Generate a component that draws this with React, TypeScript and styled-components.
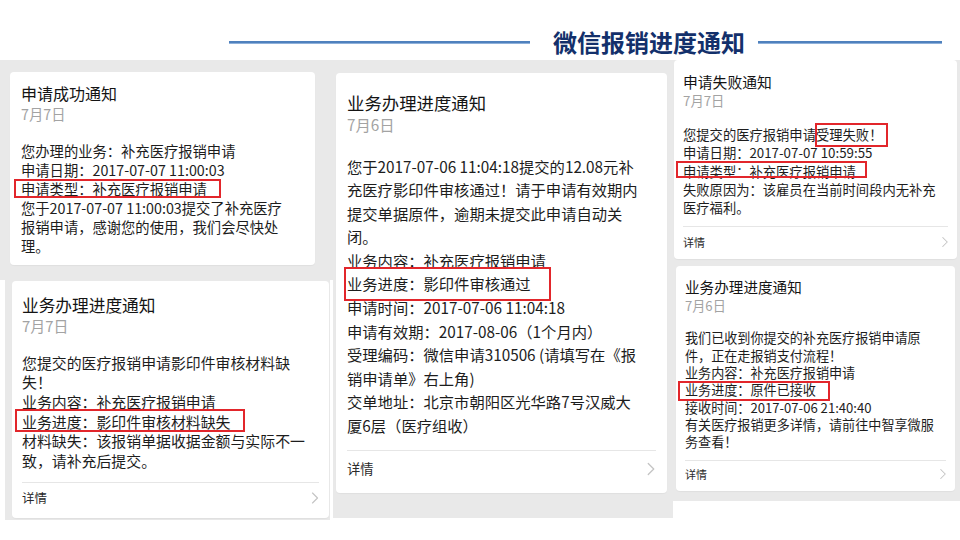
import React from "react";
import styled, { createGlobalStyle } from "styled-components";
import { ChevronRight } from "lucide-react";

const GlobalStyle = createGlobalStyle`
  html, body {
    margin: 0;
    padding: 0;
    background: #ffffff;
  }
  body {
    width: 960px;
    height: 540px;
    overflow: hidden;
    font-family: "Noto Sans CJK SC", "Noto Sans", sans-serif;
  }
  * {
    box-sizing: border-box;
  }
`;

type Spec = {
  pt: number;
  px: number;
  title: number;
  titleLh: number;
  dateLh: number;
  dateMt?: number;
  body: number;
  lh: number;
  gap: number;
  tail: number;
  foot?: { h: number; pt: number; size: number; lh: number };
};

type Line = string | { pre?: string; mark: string; inset: string };

type Notice = {
  title: string;
  date: string;
  spec: Spec;
  lines: Line[];
};

const Page = styled.div`
  width: 960px;
  height: 540px;
  display: flex;
  flex-direction: column;
`;

const Header = styled.header`
  height: 60px;
  padding: 24px 0 0 229px;
  display: flex;
  align-items: center;
`;

const Rule = styled.div<{ $w: number }>`
  width: ${(p) => p.$w}px;
  height: 3px;
  background: #4f81bd;
  border-bottom: 1px solid #8eb0da;
`;

const Heading = styled.h1`
  margin: 0 13px 0 23px;
  font-size: 24px;
  line-height: 30px;
  font-weight: 700;
  color: #13306b;
  letter-spacing: 0;
  white-space: nowrap;
`;

const Stage = styled.main`
  display: flex;
  align-items: flex-start;
`;

const Column = styled.div`
  width: 333px;
  display: flex;
  flex-direction: column;
`;

const Shot = styled.section<{ $w: number; $h: number; $pad: string; $ml?: number }>`
  width: ${(p) => p.$w}px;
  height: ${(p) => p.$h}px;
  margin-left: ${(p) => p.$ml ?? 0}px;
  padding: ${(p) => p.$pad};
  background: #e9e9e9;
  display: flex;
  flex-direction: column;
  gap: 7px;
`;

const Card = styled.article<{ $s: Spec; $mx?: number }>`
  margin: 0 ${(p) => p.$mx ?? 0}px;
  background: #ffffff;
  border-radius: 4px;
  box-shadow: 0 1px 1px rgba(0, 0, 0, 0.04);
  padding-top: ${(p) => p.$s.pt}px;
  padding-bottom: ${(p) => (p.$s.foot ? 0 : p.$s.tail)}px;
  --px: ${(p) => p.$s.px}px;
  --title: ${(p) => p.$s.title}px;
  --tlh: ${(p) => p.$s.titleLh}px;
  --dlh: ${(p) => p.$s.dateLh}px;
  --dmt: ${(p) => p.$s.dateMt ?? 0}px;
  --body: ${(p) => p.$s.body}px;
  --lh: ${(p) => p.$s.lh}px;
`;

const Title = styled.div`
  padding: 0 var(--px);
  font-size: var(--title);
  line-height: var(--tlh);
  color: #141414;
  white-space: nowrap;
`;

const DateText = styled.div<{ $gap: number }>`
  padding: 0 var(--px);
  margin-top: var(--dmt);
  margin-bottom: ${(p) => p.$gap}px;
  font-size: var(--body);
  line-height: var(--dlh);
  color: #a3a3a3;
`;

const Body = styled.div`
  padding: 0 var(--px);
  font-size: var(--body);
  line-height: var(--lh);
  color: #1d1d1d;
`;

const Row = styled.div`
  white-space: nowrap;
`;

const Mark = styled.span<{ $inset: string }>`
  position: relative;
  display: inline-block;
  vertical-align: top;

  &::after {
    content: "";
    position: absolute;
    inset: ${(p) => p.$inset};
    border: 2px solid #e2262b;
    pointer-events: none;
  }
`;

const Footer = styled.div<{ $h: number; $pt: number; $size: number; $lh: number; $tail: number }>`
  margin: ${(p) => p.$tail}px var(--px) 0;
  height: ${(p) => p.$h}px;
  padding-top: ${(p) => p.$pt}px;
  border-top: 1px solid #e6e6e6;
  display: flex;
  align-items: flex-start;
  justify-content: space-between;
  font-size: ${(p) => p.$size}px;
  line-height: ${(p) => p.$lh}px;
  color: #2a2a2a;

  svg {
    margin-right: -6px;
    flex-shrink: 0;
  }
`;

const notices: Record<string, Notice> = {
  success: {
    title: "申请成功通知",
    date: "7月7日",
    spec: { pt: 10.5, px: 11, title: 16, titleLh: 21, dateLh: 19, body: 14.3, lh: 19, gap: 18, tail: 10 },
    lines: [
      "您办理的业务：补充医疗报销申请",
      "申请日期：2017-07-07 11:00:03",
      { mark: "申请类型：补充医疗报销申请", inset: "0 -14px 0 -7px" },
      "您于2017-07-07 11:00:03提交了补充医疗",
      "报销申请，感谢您的使用，我们会尽快处",
      "理。",
    ],
  },
  missing: {
    title: "业务办理进度通知",
    date: "7月7日",
    spec: {
      pt: 13.5,
      px: 10,
      title: 16.7,
      titleLh: 21,
      dateLh: 19,
      body: 14.9,
      lh: 19.7,
      gap: 18,
      tail: 11,
      foot: { h: 36, pt: 5, size: 12.5, lh: 20 },
    },
    lines: [
      "您提交的医疗报销申请影印件审核材料缺",
      "失！",
      "业务内容：补充医疗报销申请",
      { mark: "业务进度：影印件审核材料缺失", inset: "-3px -15px -1px -7px" },
      "材料缺失：该报销单据收据金额与实际不一",
      "致，请补充后提交。",
    ],
  },
  passed: {
    title: "业务办理进度通知",
    date: "7月6日",
    spec: {
      pt: 17.5,
      px: 11,
      title: 17.4,
      titleLh: 23,
      dateLh: 21,
      body: 15.3,
      lh: 23.6,
      gap: 20,
      tail: 12,
      foot: { h: 43, pt: 7, size: 13.3, lh: 22 },
    },
    lines: [
      "您于2017-07-06 11:04:18提交的12.08元补",
      "充医疗影印件审核通过！请于申请有效期内",
      "提交单据原件，逾期未提交此申请自动关",
      "闭。",
      "业务内容：补充医疗报销申请",
      { mark: "业务进度：影印件审核通过", inset: "-5px -20px -5px -3px" },
      "申请时间：2017-07-06 11:04:18",
      "申请有效期：2017-08-06（1个月内）",
      "受理编码：微信申请310506 (请填写在《报",
      "销申请单》右上角)",
      "交单地址：北京市朝阳区光华路7号汉威大",
      "厦6层（医疗组收）",
    ],
  },
  failed: {
    title: "申请失败通知",
    date: "7月7日",
    spec: {
      pt: 13,
      px: 9,
      title: 14.8,
      titleLh: 18,
      dateLh: 16,
      dateMt: 2,
      body: 13.3,
      lh: 18.3,
      gap: 17,
      tail: 9,
      foot: { h: 33, pt: 6, size: 11, lh: 18 },
    },
    lines: [
      { pre: "您提交的医疗报销申请", mark: "受理失败！", inset: "-3px -6px -3px -1px" },
      "申请日期：2017-07-07 10:59:55",
      { mark: "申请类型：补充医疗报销申请", inset: "-2px -11px 3px -7px" },
      "失败原因为：该雇员在当前时间段内无补充",
      "医疗福利。",
    ],
  },
  received: {
    title: "业务办理进度通知",
    date: "7月6日",
    spec: {
      pt: 12,
      px: 9,
      title: 14.6,
      titleLh: 18,
      dateLh: 16,
      dateMt: 2,
      body: 13.1,
      lh: 17.3,
      gap: 15,
      tail: 9,
      foot: { h: 31, pt: 4, size: 11, lh: 18 },
    },
    lines: [
      "我们已收到你提交的补充医疗报销申请原",
      "件，正在走报销支付流程！",
      "业务内容：补充医疗报销申请",
      { mark: "业务进度：原件已接收", inset: "0 -14px -2px -7px" },
      "接收时间：2017-07-06 21:40:40",
      "有关医疗报销更多详情，请前往中智享微服",
      "务查看！",
    ],
  },
};

const NoticeCard = ({ notice, mx }: { notice: Notice; mx?: number }) => {
  const { spec } = notice;
  return (
    <Card $s={spec} $mx={mx}>
      <Title>{notice.title}</Title>
      <DateText $gap={spec.gap}>{notice.date}</DateText>
      <Body>
        {notice.lines.map((line, i) =>
          typeof line === "string" ? (
            <Row key={i}>{line}</Row>
          ) : (
            <Row key={i}>
              {line.pre}
              <Mark $inset={line.inset}>{line.mark}</Mark>
            </Row>
          )
        )}
      </Body>
      {spec.foot && (
        <Footer
          $h={spec.foot.h}
          $pt={spec.foot.pt}
          $size={spec.foot.size}
          $lh={spec.foot.lh}
          $tail={spec.tail}
        >
          <span>详情</span>
          <ChevronRight size={spec.foot.lh} strokeWidth={1.4} color="#c4c4c4" />
        </Footer>
      )}
    </Card>
  );
};

export default function App() {
  return (
    <Page>
      <GlobalStyle />
      <Header>
        <Rule $w={301} />
        <Heading>微信报销进度通知</Heading>
        <Rule $w={184} />
      </Header>
      <Stage>
        <Column>
          <Shot $w={333} $h={220} $pad="12px 18px 0 10px">
            <NoticeCard notice={notices.success} />
          </Shot>
          <Shot $w={325} $h={240} $ml={5} $pad="1px 1px 0 7px">
            <NoticeCard notice={notices.missing} />
          </Shot>
        </Column>
        <Shot $w={340} $h={458} $pad="13px 6px 0 3px">
          <NoticeCard notice={notices.passed} />
        </Shot>
        <Shot $w={287} $h={441} $pad="0 3px 0 1px">
          <NoticeCard notice={notices.failed} />
          <NoticeCard notice={notices.received} mx={2} />
        </Shot>
      </Stage>
    </Page>
  );
}
